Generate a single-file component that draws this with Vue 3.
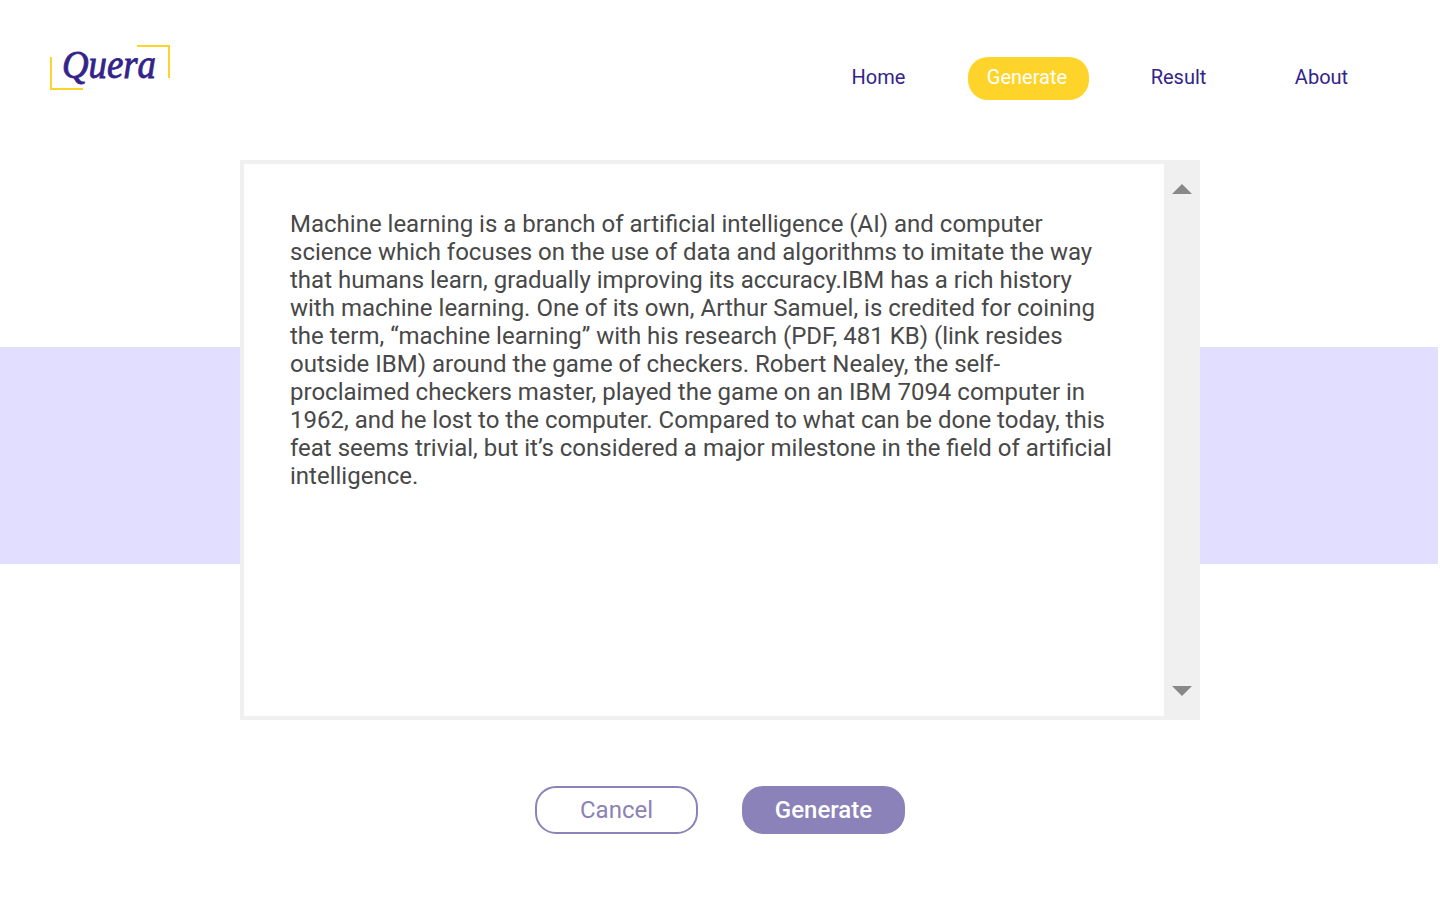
<script setup>
const links = [
  { label: 'Home', key: 'home' },
  { label: 'Generate', key: 'generate', active: true },
  { label: 'Result', key: 'result' },
  { label: 'About', key: 'about' },
]
const passage =
  'Machine learning is a branch of artificial intelligence (AI) and computer science which focuses on the use of data and algorithms to imitate the way that humans learn, gradually improving its accuracy.IBM has a rich history with machine learning. One of its own, Arthur Samuel, is credited for coining the term, “machine learning” with his research (PDF, 481 KB) (link resides outside IBM) around the game of checkers. Robert Nealey, the self-proclaimed checkers master, played the game on an IBM 7094 computer in 1962, and he lost to the computer. Compared to what can be done today, this feat seems trivial, but it’s considered a major milestone in the field of artificial intelligence.'
</script>

<template>
  <div class="page">
    <header class="header">
      <svg class="logo" width="120" height="46" viewBox="0 0 120 46" role="img" aria-label="Quera">
        <path d="M1 13V45H33M87 2H119V34" fill="none" stroke="#ffd42a" stroke-width="2" />
        <text class="logo-text" x="12" y="34" textLength="94" lengthAdjust="spacingAndGlyphs">Quera</text>
      </svg>
      <nav class="nav">
        <a v-for="link in links" :key="link.key" :class="['link', link.key, { active: link.active }]">{{ link.label }}</a>
      </nav>
    </header>

    <main class="stage">
      <div class="band"></div>
      <section class="panel">
        <p class="passage">{{ passage }}</p>
        <div class="scrollbar">
          <svg width="20" height="10" viewBox="0 0 20 10"><path d="M0 10L10 0L20 10Z" fill="#888" /></svg>
          <svg width="20" height="10" viewBox="0 0 20 10"><path d="M0 0L10 10L20 0Z" fill="#888" /></svg>
        </div>
      </section>
    </main>

    <footer class="actions">
      <button class="button cancel">Cancel</button>
      <button class="button submit">Generate</button>
    </footer>
  </div>
</template>

<style>
body {
  margin: 0;
  background: #fff;
}
</style>

<style scoped>
.page {
  box-sizing: border-box;
  width: 1440px;
  height: 911px;
  overflow: hidden;
  font-family: Roboto, sans-serif;
}
.header {
  display: flex;
  justify-content: space-between;
  align-items: flex-start;
  box-sizing: border-box;
  height: 160px;
  padding: 44px 75px 0 50px;
}
.logo {
  display: block;
  overflow: visible;
}
.logo-text {
  font: italic 41px "Liberation Serif", serif;
  fill: #33248a;
  stroke: #33248a;
  stroke-width: 0.9px;
}
.nav {
  display: flex;
  margin-top: 13px;
}
.link {
  box-sizing: border-box;
  height: 43px;
  border-radius: 20px;
  font-size: 20px;
  line-height: 40px;
  text-align: center;
  color: #33248a;
}
.home { width: 87px; margin-right: 46px; }
.generate { width: 121px; padding-right: 3px; margin-right: 46px; }
.result { width: 87px; margin-right: 56px; }
.about { width: 87px; }
.active {
  background: #ffd42a;
  color: #fff;
}
.stage {
  display: grid;
  grid-template: 560px / 1440px;
}
.band {
  grid-area: 1 / 1;
  width: 1438px;
  height: 217px;
  margin-top: 187px;
  background: #e2deff;
}
.panel {
  grid-area: 1 / 1;
  justify-self: center;
  display: flex;
  justify-content: space-between;
  box-sizing: border-box;
  width: 960px;
  height: 560px;
  border: 4px solid #f0f0f0;
  border-right: 0;
  background: #fff;
}
.passage {
  width: 826px;
  margin: 46px 0 0 46px;
  font-size: 24px;
  line-height: 28px;
  color: #484848;
}
.scrollbar {
  display: flex;
  flex-direction: column;
  justify-content: space-between;
  align-items: center;
  box-sizing: border-box;
  width: 36px;
  padding: 20px 0;
  background: #f0f0f0;
}
.actions {
  display: flex;
  justify-content: center;
  gap: 44px;
  padding-top: 66px;
}
.button {
  box-sizing: border-box;
  width: 163px;
  height: 48px;
  padding: 0;
  border: 2px solid #8a82b8;
  border-radius: 21px;
  font: 24px/44px Roboto, sans-serif;
}
.cancel {
  background: #fff;
  color: #8a82b8;
}
.submit {
  background: #8a82b8;
  color: #fff;
  font-weight: 500;
}
</style>
